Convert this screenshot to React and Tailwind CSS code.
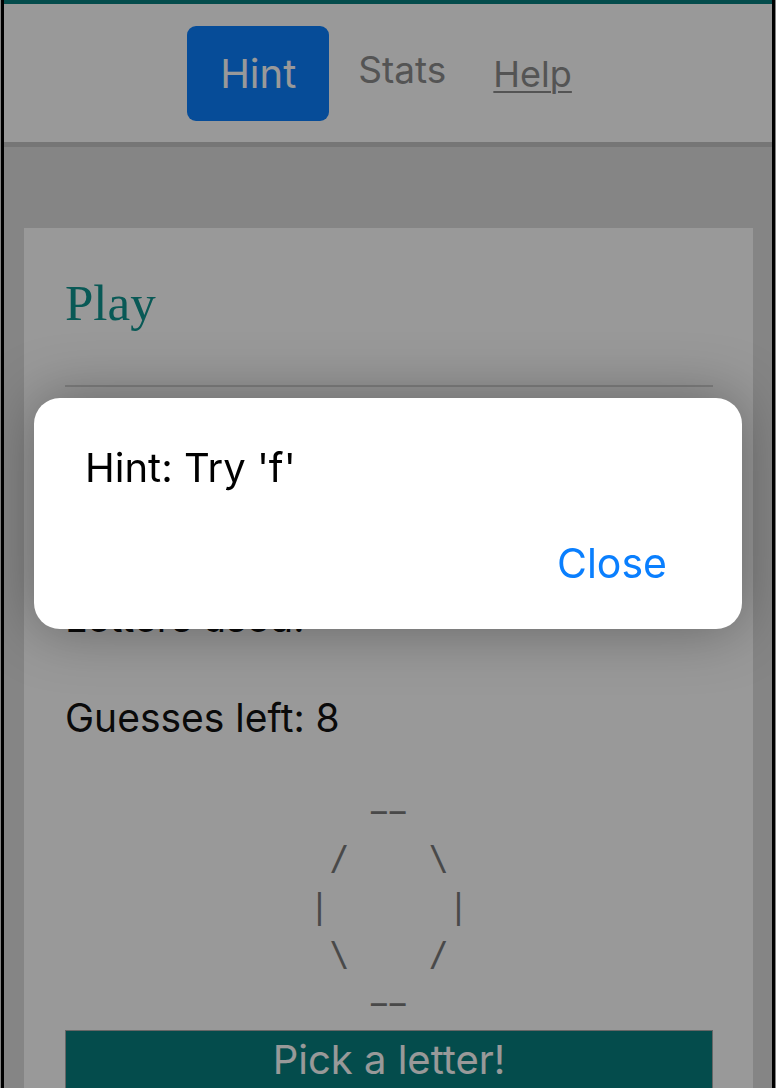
function Dashes() {
  return (
    <div className="whitespace-pre">
      {"   "}
      <span className="inline-block scale-x-[1.9] tracking-[-10px]">--</span>
      {"   "}
    </div>
  );
}

export default function App() {
  return (
    <div className="min-h-screen bg-[#dedede] px-px font-['Inter','Liberation_Sans',Arial,sans-serif]">
      <div className="min-h-[1088px] border-x-[3px] border-black bg-[#dedede]">
        <div className="h-[4px] bg-[#077f7f]" />
        <header className="h-[143px] bg-white border-b-[5px] border-[#c5c5c5] flex justify-center items-start pt-[22px] pr-[17px]">
          <button className="bg-[#0a7ffe] text-white rounded-[9px] px-[33px] pt-[24px] pb-[23px] text-[40px] leading-[48px]">
            Hint
          </button>
          <span className="ml-[29px] mt-[20px] text-[37px] leading-[48px] text-[#8c8c8c]">Stats</span>
          <span className="ml-[47px] mt-[24px] text-[36px] leading-[48px] text-[#8c8c8c] underline underline-offset-[4px] decoration-[2px]">
            Help
          </span>
        </header>
        <main className="pt-[81px] pl-[20px] pr-[19px]">
          <section className="bg-white pl-[41px] pr-[40px] pt-[47px] pb-[40px]">
            <h1 className="font-['Liberation_Serif','Times_New_Roman',serif] text-[51px] leading-[56px] text-[#10958f]">
              Play
            </h1>
            <div className="mt-[54px] h-[2px] bg-[#d5d5d5]" />
            <p className="mt-[52px] text-[39px] leading-[48px] text-[#111] tracking-[6px]">_ _ _ _ _ _</p>
            <p className="mt-[107px] text-[39px] leading-[48px] text-[#111]">Letters used:</p>
            <p className="mt-[52px] text-[39px] leading-[48px] text-[#111]">Guesses left: 8</p>
            <div className="mt-[45px] flex justify-center">
              <div className="font-['DejaVu_Sans_Mono','Liberation_Mono',monospace] text-[33px] leading-[48px] text-[#7a7a7a]">
                <Dashes />
                <div className="whitespace-pre">{" /    \\ "}</div>
                <div className="whitespace-pre">{"|      |"}</div>
                <div className="whitespace-pre">{" \\    / "}</div>
                <Dashes />
              </div>
            </div>
            <button className="mt-[3px] w-full border border-[#aaaaaa] bg-[#077f7f] text-white text-[40px] leading-[48px] pt-[5px] pb-[12px]">
              Pick a letter!
            </button>
          </section>
        </main>
      </div>
      <div className="fixed inset-0 bg-black/40" />
      <div className="fixed left-[34px] top-[398px] w-[708px] rounded-[26px] bg-white shadow-[0_0_60px_rgba(0,0,0,0.35)] pl-[51px] pr-[75px] pt-[44px] pb-[40px]">
        <p className="text-[40px] leading-[52px] text-black">Hint: Try 'f'</p>
        <div className="mt-[43px] flex justify-end">
          <button className="text-[41px] leading-[52px] text-[#0a7ffe]">Close</button>
        </div>
      </div>
    </div>
  );
}
